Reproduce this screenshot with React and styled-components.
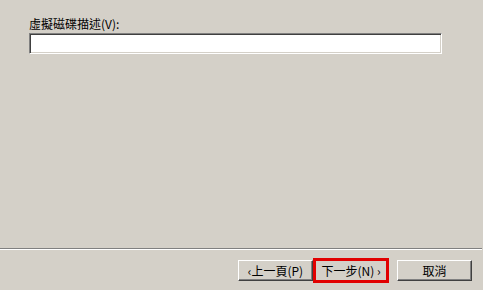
import React from 'react';
import styled, { createGlobalStyle } from 'styled-components';

const GlobalStyle = createGlobalStyle`
  html, body {
    margin: 0;
    padding: 0;
    background: #d4d0c8;
  }
  body {
    font-family: "Noto Sans CJK TC", "Liberation Sans", sans-serif;
    font-size: 12px;
    color: #000;
  }
`;

const Page = styled.div`
  width: 483px;
  height: 290px;
  display: flex;
  flex-direction: column;
  background: #d4d0c8;
  overflow: hidden;
`;

const Body = styled.div`
  flex: 1;
  display: flex;
  flex-direction: column;
  padding: 17px 42px 0 29px;
`;

const Label = styled.label`
  font-size: 12px;
  line-height: 14px;
  height: 14px;
`;

const TextInput = styled.input`
  box-sizing: border-box;
  margin-top: 2px;
  width: 413px;
  height: 21px;
  padding: 0 3px;
  background: #fff;
  border: 1px solid;
  border-color: #808080 #ffffff #ffffff #808080;
  box-shadow: inset 1px 1px 0 #404040, inset -1px -1px 0 #d4d0c8;
  outline: none;
  font: inherit;
`;

const Separator = styled.div`
  width: 482px;
  height: 0;
  border-top: 1px solid #808080;
  border-bottom: 1px solid #ffffff;
`;

const Footer = styled.div`
  height: 40px;
  box-sizing: border-box;
  padding: 8px 11px 0 0;
  display: flex;
  justify-content: flex-end;
  align-items: flex-start;
`;

const Button = styled.button`
  box-sizing: border-box;
  width: ${(p) => p.$w || 75}px;
  height: 21px;
  margin: 2px 0 0 ${(p) => p.$gap || 0}px;
  padding: 0;
  background: #d4d0c8;
  border: 1px solid;
  border-color: #ffffff #404040 #404040 #ffffff;
  box-shadow: inset -1px -1px 0 #808080;
  font-family: "Noto Sans CJK TC", "Liberation Sans", sans-serif;
  font-size: 12px;
  line-height: 17px;
  color: #000;
`;

const Highlighted = styled(Button)`
  height: 25px;
  margin-top: 0;
  border: 3px solid #e10000;
  box-shadow: none;
`;

export default function App() {
  return (
    <Page>
      <GlobalStyle />
      <Body>
        <Label htmlFor="desc">虛擬磁碟描述(V):</Label>
        <TextInput id="desc" type="text" />
      </Body>
      <Separator />
      <Footer>
        <Button>‹上一頁(P)</Button>
        <Highlighted $w={76}>下一步(N) ›</Highlighted>
        <Button $gap={8}>取消</Button>
      </Footer>
    </Page>
  );
}
